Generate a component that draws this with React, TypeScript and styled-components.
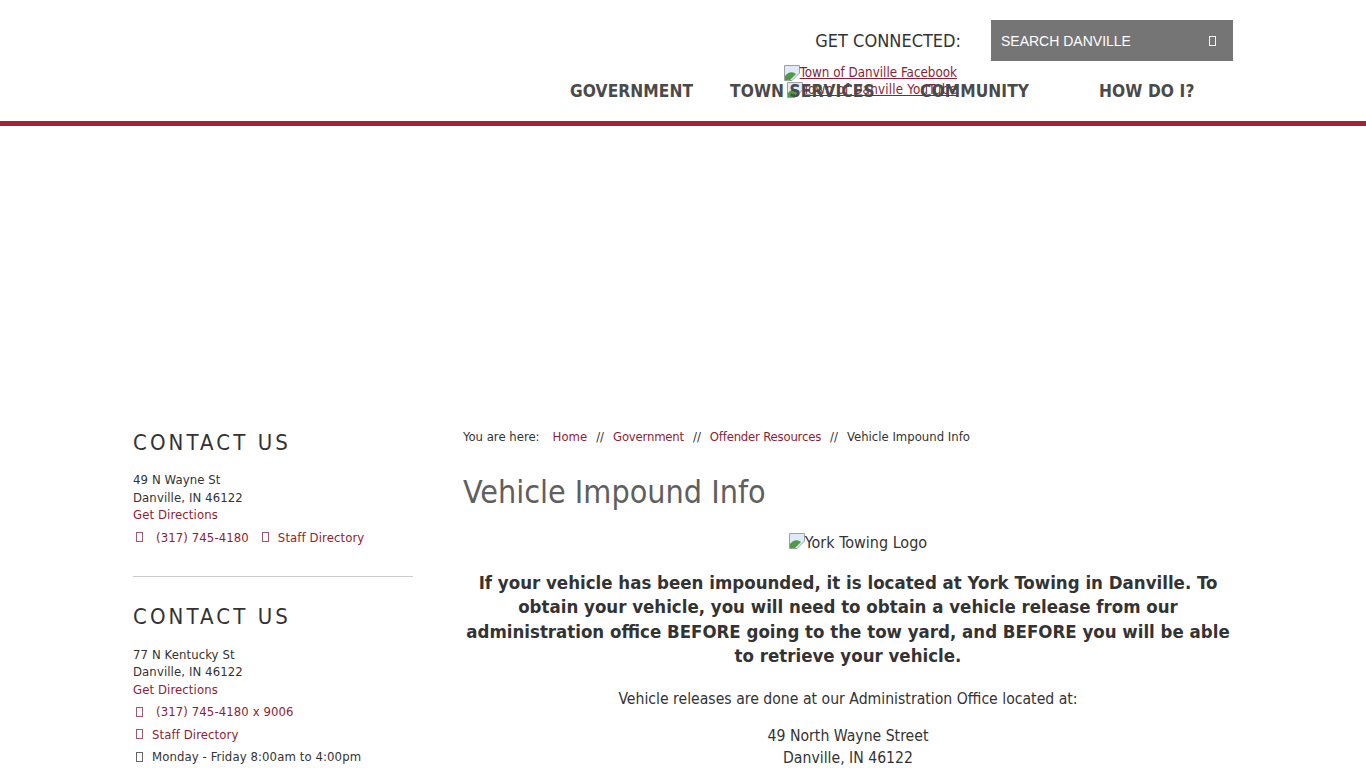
import React from 'react';
import styled, { createGlobalStyle } from 'styled-components';

const GlobalStyle = createGlobalStyle`
  html, body {
    margin: 0;
    height: 768px;
    overflow: hidden;
    background: #fff;
  }
  body {
    font-family: "DejaVu Sans", sans-serif;
    font-stretch: condensed;
    color: #333;
  }
  a { color: #8f1d35; text-decoration: none; }
`;

const BrokenImage = () => (
  <BrokenIcon viewBox="0 0 16 16" aria-hidden="true">
    <path d="M0.5 0.5H15.5V8L8 15.5H0.5Z" fill="#dfe9f8" stroke="#9aa0a8" />
    <path d="M1 15V11C4 7 8 6 12 9L6 15Z" fill="#4f9a44" />
    <path d="M9.5 15.5L15.5 9.5V15.5Z" fill="#fff" />
  </BrokenIcon>
);

export default function App() {
  return (
    <>
      <GlobalStyle />
      <Header>
        <TopRow>
          <Connected>GET CONNECTED:</Connected>
          <Search>
            <span>SEARCH DANVILLE</span>
            <Tofu $tone="light" />
          </Search>
        </TopRow>
        <NavRow>
          <SocialLinks>
            <SocialLink href="#"><BrokenImage />Town of Danville Facebook</SocialLink>
            <SocialLink href="#"><BrokenImage />Town of Danville YouTube</SocialLink>
          </SocialLinks>
          <NavItem $width={160}>GOVERNMENT</NavItem>
          <NavItem $width={190}>TOWN SERVICES</NavItem>
          <NavItem $width={179}>COMMUNITY</NavItem>
          <NavItem $width={134}>HOW DO I?</NavItem>
        </NavRow>
      </Header>
      <Hero />
      <Columns>
        <Sidebar>
          <ContactBlock>
            <ContactTitle $gap={14}>CONTACT US</ContactTitle>
            <Address>
              49 N Wayne St<br />
              Danville, IN 46122<br />
              <a href="#">Get Directions</a>
            </Address>
            <InfoRow>
              <Tofu />
              <PhoneLink href="#">(317) 745-4180</PhoneLink>
              <Tofu />
              <a href="#">Staff Directory</a>
            </InfoRow>
          </ContactBlock>
          <Divider />
          <ContactBlock>
            <ContactTitle $gap={14.5}>CONTACT US</ContactTitle>
            <Address>
              77 N Kentucky St<br />
              Danville, IN 46122<br />
              <a href="#">Get Directions</a>
            </Address>
            <InfoRow>
              <Tofu />
              <PhoneLink href="#">(317) 745-4180 x 9006</PhoneLink>
            </InfoRow>
            <InfoRow>
              <Tofu />
              <a href="#">Staff Directory</a>
            </InfoRow>
            <InfoRow>
              <Tofu $tone="dark" />
              <span>Monday - Friday 8:00am to 4:00pm</span>
            </InfoRow>
          </ContactBlock>
        </Sidebar>
        <Main>
          <Breadcrumb>
            <span>You are here:</span>
            <a href="#">Home</a>
            <Sep>//</Sep>
            <a href="#">Government</a>
            <Sep>//</Sep>
            <a href="#">Offender Resources</a>
            <Sep>//</Sep>
            <span>Vehicle Impound Info</span>
          </Breadcrumb>
          <PageTitle>Vehicle Impound Info</PageTitle>
          <LogoLine><BrokenImage />York Towing Logo</LogoLine>
          <Lead>
            If your vehicle has been impounded, it is located at York Towing in Danville. To obtain your vehicle, you will need to obtain a vehicle release from our administration office BEFORE going to the tow yard, and BEFORE you will be able to retrieve your vehicle.
          </Lead>
          <Copy>Vehicle releases are done at our Administration Office located at:</Copy>
          <Copy>49 North Wayne Street<br />Danville, IN 46122</Copy>
        </Main>
      </Columns>
    </>
  );
}

const toneColours = { light: '#f4f4f4', dark: '#666', link: '#a8576a' };

const Header = styled.header`
  height: 121px;
  border-bottom: 5px solid #a02338;
  width: 1100px;
  padding: 0 133px;
  display: flex;
  flex-direction: column;
`;

const TopRow = styled.div`
  display: flex;
  justify-content: flex-end;
  align-items: center;
  padding-top: 20px;
  gap: 30px;
`;

const Connected = styled.div`
  font-size: 18px;
  color: #333;
`;

const Search = styled.div`
  width: 242px;
  height: 41px;
  box-sizing: border-box;
  padding: 0 17px 0 10px;
  background: #757575;
  color: #fff;
  font-family: "Liberation Sans", sans-serif;
  font-size: 14px;
  display: flex;
  align-items: center;
  justify-content: space-between;
`;

const Tofu = styled.i<{ $tone?: keyof typeof toneColours }>`
  display: inline-block;
  width: 7px;
  height: 10px;
  box-sizing: border-box;
  border: 1px solid ${(p) => toneColours[p.$tone ?? 'link']};
  flex: none;
`;

const NavRow = styled.nav`
  position: relative;
  display: flex;
  justify-content: flex-end;
  margin-top: 18px;
`;

const NavItem = styled.div<{ $width: number }>`
  position: relative;
  width: ${(p) => p.$width}px;
  font-size: 17.2px;
  letter-spacing: 0.1px;
  font-weight: 700;
  line-height: 24px;
  color: #4a4a4a;
`;

const SocialLinks = styled.div`
  position: absolute;
  top: -15px;
  right: 276px;
  display: flex;
  flex-direction: column;
  align-items: flex-end;
`;

const SocialLink = styled.a`
  display: flex;
  align-items: flex-end;
  height: 17px;
  font-size: 13.3px;
  line-height: 17px;
  text-decoration: underline;
  & + & { letter-spacing: 0.2px; }
`;

const BrokenIcon = styled.svg`
  width: 16px;
  height: 16px;
  flex: none;
`;

const Hero = styled.div`
  height: 298px;
`;

const Columns = styled.div`
  display: flex;
  gap: 50px;
  padding: 0 133px;
`;

const Sidebar = styled.aside`
  width: 280px;
  flex: none;
  font-size: 13px;
  letter-spacing: 0.1px;
  line-height: 17.5px;
`;

const ContactBlock = styled.section``;

const ContactTitle = styled.h3<{ $gap: number }>`
  margin: 5px 0 ${(p) => p.$gap}px;
  font-size: 22px;
  line-height: 28px;
  font-weight: 400;
  letter-spacing: 3.1px;
  color: #333;
`;

const Address = styled.p`
  margin: 0 0 2.5px;
`;

const InfoRow = styled.div`
  display: flex;
  align-items: center;
  height: 22.5px;
  padding-left: 3px;
  gap: 9px;
`;

const PhoneLink = styled.a`
  margin-left: 4px;
  margin-right: 4px;
`;

const Divider = styled.hr`
  margin: 27.5px 0 26px;
  border: 0;
  border-top: 1px solid #ccc;
`;

const Main = styled.main`
  width: 770px;
`;

const Breadcrumb = styled.div`
  display: flex;
  gap: 8px;
  font-size: 13px;
  line-height: 18px;
  margin-top: 4px;
  & > a { letter-spacing: -0.2px; }
  & > a:first-of-type { margin-left: 5px; letter-spacing: 0; }
`;

const Sep = styled.span`
  padding: 0 1px;
`;

const PageTitle = styled.h1`
  margin: 26px 0 21px;
  font-size: 32px;
  line-height: 40px;
  font-weight: 400;
  color: #5f5f5f;
`;

const LogoLine = styled.div`
  display: flex;
  justify-content: center;
  align-items: flex-start;
  padding-left: 20px;
  font-size: 16px;
  line-height: 20px;
  margin-bottom: 18px;
`;

const Lead = styled.p`
  margin: 0 0 19.6px;
  text-align: center;
  font-size: 18.5px;
  line-height: 24.3px;
  font-weight: 700;
`;

const Copy = styled.p`
  margin: 0 0 16px;
  text-align: center;
  font-size: 15.65px;
  line-height: 21.5px;
`;
